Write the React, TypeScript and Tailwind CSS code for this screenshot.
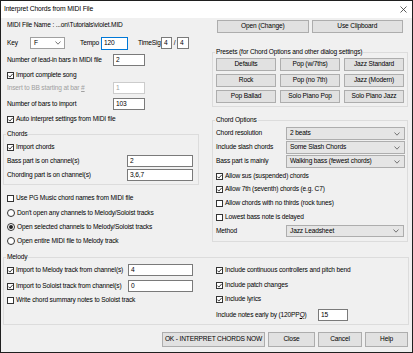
import React from "react";

function Chevron() {
  return (
    <svg width="6" height="4" viewBox="0 0 6 4" className="shrink-0">
      <polyline points="0.5,0.5 3,3.2 5.5,0.5" fill="none" stroke="#666" strokeWidth="0.9" />
    </svg>
  );
}

function Check({ checked = false }: { checked?: boolean }) {
  return (
    <span className="relative flex h-[7px] w-[7px] shrink-0 border border-[#333] bg-white">
      {checked && (
        <svg width="7" height="7" viewBox="0 0 7 7" className="absolute left-[-1px] top-[-1px]">
          <polyline points="1.4,3.6 2.9,5.1 5.7,1.9" fill="none" stroke="#222" strokeWidth="0.9" />
        </svg>
      )}
    </span>
  );
}

function Radio({ checked = false }: { checked?: boolean }) {
  return (
    <span className="flex h-[8px] w-[8px] shrink-0 items-center justify-center rounded-full border border-[#333] bg-white">
      {checked && <span className="h-[4px] w-[4px] rounded-full bg-[#222]" />}
    </span>
  );
}

function CheckRow({ checked, label, className = "" }: { checked?: boolean; label: React.ReactNode; className?: string }) {
  return (
    <div className={"flex h-[12px] items-center gap-[2px] " + className}>
      <Check checked={checked} />
      <span>{label}</span>
    </div>
  );
}

function RadioRow({ checked, label, className = "" }: { checked?: boolean; label: string; className?: string }) {
  return (
    <div className={"flex h-[12px] items-center gap-[2px] " + className}>
      <Radio checked={checked} />
      <span>{label}</span>
    </div>
  );
}

function Input({ value, className = "" }: { value: string; className?: string }) {
  return (
    <div className={"flex h-[12px] shrink-0 items-center border border-[#7a7a7a] bg-white pl-[2px] " + className}>
      {value}
    </div>
  );
}

function Select({ value, className = "" }: { value: string; className?: string }) {
  return (
    <div className={"flex shrink-0 items-center justify-between border border-[#adadad] bg-[#e5e5e5] pl-[3px] pr-[4px] " + className}>
      <span>{value}</span>
      <Chevron />
    </div>
  );
}

function Btn({ label, className = "" }: { label: string; className?: string }) {
  return (
    <div className={"flex items-center justify-center border border-[#adadad] bg-[#e1e1e1] " + className}>
      {label}
    </div>
  );
}

function Group({ label, className = "", children }: { label: string; className?: string; children: React.ReactNode }) {
  return (
    <div className={"relative border border-[#dcdcdc] " + className}>
      <span className="absolute left-[2px] top-[-4px] bg-[#f0f0f0] px-[1px] leading-none">{label}</span>
      {children}
    </div>
  );
}

export default function App() {
  return (
    <div className="flex h-[353px] w-[413px] flex-col overflow-hidden whitespace-nowrap border border-[#1f1f1f] bg-[#f0f0f0] font-['Liberation_Sans',Arial,sans-serif] text-[6.6px] leading-none tracking-[-0.15px] text-black">
      {/* Title bar */}
      <div className="flex h-[17px] shrink-0 items-center justify-between bg-white pl-[3px] pr-[5px]">
        <span className="text-[6.8px]">Interpret Chords from MIDI File</span>
        <svg width="7" height="7" viewBox="0 0 7 7">
          <line x1="0.5" y1="0.5" x2="6.5" y2="6.5" stroke="#333" strokeWidth="0.8" />
          <line x1="6.5" y1="0.5" x2="0.5" y2="6.5" stroke="#333" strokeWidth="0.8" />
        </svg>
      </div>

      {/* Body */}
      <div className="flex flex-col pl-[2px] pr-[3px]">
        <div className="flex items-start gap-[13px]">
          {/* Left column */}
          <div className="flex w-[196px] flex-col">
            <div className="flex h-[14px] items-center pl-[4px]">MIDI File Name : ...on\Tutorials\violet.MID</div>

            <div className="mt-[4px] flex h-[14px] items-center pl-[4px]">
              <span className="w-[23px] shrink-0">Key</span>
              <div className="flex h-[12px] w-[35px] shrink-0 items-center justify-between border border-[#a0a0a0] bg-white pl-[3px] pr-[3px]">
                <span>F</span>
                <Chevron />
              </div>
              <span className="ml-[15px] w-[21px] shrink-0">Tempo</span>
              <Input value="120" className="h-[13px] w-[27px] border-[#0078d7]" />
              <span className="ml-[10px] w-[23px] shrink-0">TimeSig</span>
              <Input value="4" className="w-[11px]" />
              <span className="w-[5px] shrink-0 text-center">/</span>
              <Input value="4" className="w-[12px]" />
            </div>

            <div className="mt-[3px] flex h-[14px] items-center pl-[4px]">
              <span className="w-[106px] shrink-0">Number of lead-in bars in MIDI file</span>
              <Input value="2" className="w-[32px]" />
            </div>

            <CheckRow checked label="Import complete song" className="mt-[2px] pl-[4px]" />

            <div className="mt-[1px] flex h-[12px] items-center pl-[4px] text-[#a0a0a0]">
              <span className="w-[106px] shrink-0">
                Insert to BB starting at bar <span className="underline">#</span>
              </span>
              <div className="flex h-[12px] w-[32px] items-center border border-[#cccccc] bg-white pl-[2px]">1</div>
            </div>

            <div className="mt-[3px] flex h-[14px] items-center pl-[4px]">
              <span className="w-[106px] shrink-0">Number of bars to import</span>
              <Input value="103" className="w-[32px]" />
            </div>

            <CheckRow checked label="Auto interpret settings from MIDI file" className="mt-[2px] pl-[4px]" />

            <Group label="Chords" className="mt-[9px] pb-[3px] pl-[3px]">
              <CheckRow checked label="Import chords" className="mt-[6px]" />
              <div className="mt-[2px] flex h-[12px] items-center">
                <span className="w-[120px] shrink-0">Bass part is on channel(s)</span>
                <Input value="2" className="w-[66px]" />
              </div>
              <div className="mt-[2px] flex h-[12px] items-center">
                <span className="w-[120px] shrink-0">Chording part is on channel(s)</span>
                <Input value="3,6,7" className="w-[66px]" />
              </div>
            </Group>

            <CheckRow label="Use PG Music chord names from MIDI file" className="mt-[7px] pl-[4px]" />
            <RadioRow label="Don't open any channels to Melody/Soloist tracks" className="mt-[3px] pl-[4px]" />
            <RadioRow checked label="Open selected channels to Melody/Soloist tracks" className="mt-[2px] pl-[4px]" />
            <RadioRow label="Open entire MIDI file to Melody track" className="mt-[2px] pl-[4px]" />
          </div>

          {/* Right column */}
          <div className="flex w-[196px] flex-col">
            <div className="mt-[2px] grid h-[13px] grid-cols-2 gap-[3px] px-[5px]">
              <Btn label="Open (Change)" />
              <Btn label="Use Clipboard" />
            </div>

            <Group label="Presets (for Chord Options and other dialog settings)" className="mt-[19px] px-[3px] pb-[3px]">
              <div className="mt-[5px] grid grid-cols-3 gap-x-[4px] gap-y-[3px]">
                <Btn label="Defaults" className="h-[13px]" />
                <Btn label="Pop (w/7ths)" className="h-[13px]" />
                <Btn label="Jazz Standard" className="h-[13px]" />
                <Btn label="Rock" className="h-[13px]" />
                <Btn label="Pop (no 7th)" className="h-[13px]" />
                <Btn label="Jazz (Modern)" className="h-[13px]" />
                <Btn label="Pop Ballad" className="h-[13px]" />
                <Btn label="Solo Piano Pop" className="h-[13px]" />
                <Btn label="Solo Piano Jazz" className="h-[13px]" />
              </div>
            </Group>

            <Group label="Chord Options" className="mt-[13px] pb-[4px] pl-[3px]">
              <div className="mt-[6px] flex h-[13px] items-center">
                <span className="w-[70px] shrink-0">Chord resolution</span>
                <Select value="2 beats" className="h-[13px] w-[119px]" />
              </div>
              <div className="mt-[1px] flex h-[13px] items-center">
                <span className="w-[70px] shrink-0">Include slash chords</span>
                <Select value="Some Slash Chords" className="h-[13px] w-[119px]" />
              </div>
              <div className="mt-[1px] flex h-[13px] items-center">
                <span className="w-[70px] shrink-0">Bass part is mainly</span>
                <Select value="Walking bass (fewest chords)" className="h-[13px] w-[119px]" />
              </div>
              <CheckRow checked label="Allow sus (suspended) chords" className="mt-[2px]" />
              <CheckRow checked label="Allow 7th (seventh) chords (e.g. C7)" className="mt-[1px]" />
              <CheckRow label="Allow chords with no thirds (rock tunes)" className="mt-[2px]" />
              <CheckRow label="Lowest bass note is delayed" className="mt-[2px]" />
              <div className="mt-[2px] flex h-[12px] items-center">
                <span className="w-[70px] shrink-0">Method</span>
                <Select value="Jazz Leadsheet" className="h-[12px] w-[118px]" />
              </div>
            </Group>
          </div>
        </div>

        {/* Melody */}
        <Group label="Melody" className="mt-[10px]">
          <div className="flex pb-[3px]">
            <div className="flex w-[208px] flex-col pl-[3px]">
              <div className="mt-[6px] flex h-[12px] items-center gap-[2px]">
                <Check checked />
                <span className="w-[110px] shrink-0">Import to Melody track from channel(s)</span>
                <Input value="4" className="w-[65px]" />
              </div>
              <div className="mt-[4px] flex h-[12px] items-center gap-[2px]">
                <Check checked />
                <span className="w-[110px] shrink-0">Import to Soloist track from channel(s)</span>
                <Input value="0" className="w-[65px]" />
              </div>
              <CheckRow label="Write chord summary notes to Soloist track" className="mt-[2px]" />
            </div>
            <div className="flex flex-col pl-[4px]">
              <CheckRow checked label="Include continuous controllers and pitch bend" className="mt-[6px]" />
              <CheckRow checked label="Include patch changes" className="mt-[3px]" />
              <CheckRow checked label="Include lyrics" className="mt-[2px]" />
              <div className="mt-[4px] flex h-[12px] items-center">
                <span className="w-[102px] shrink-0">
                  Include notes early by (120PP<span className="underline">Q</span>)
                </span>
                <Input value="15" className="w-[30px]" />
              </div>
            </div>
          </div>
        </Group>

        {/* Bottom buttons */}
        <div className="mt-[7px] flex h-[15px] justify-end gap-[3px] pr-[1px]">
          <Btn label="OK - INTERPRET CHORDS NOW" className="w-[103px] border-[#4a4a4a]" />
          <Btn label="Close" className="w-[47px]" />
          <Btn label="Cancel" className="w-[44px]" />
          <Btn label="Help" className="w-[43px]" />
        </div>
      </div>
    </div>
  );
}
